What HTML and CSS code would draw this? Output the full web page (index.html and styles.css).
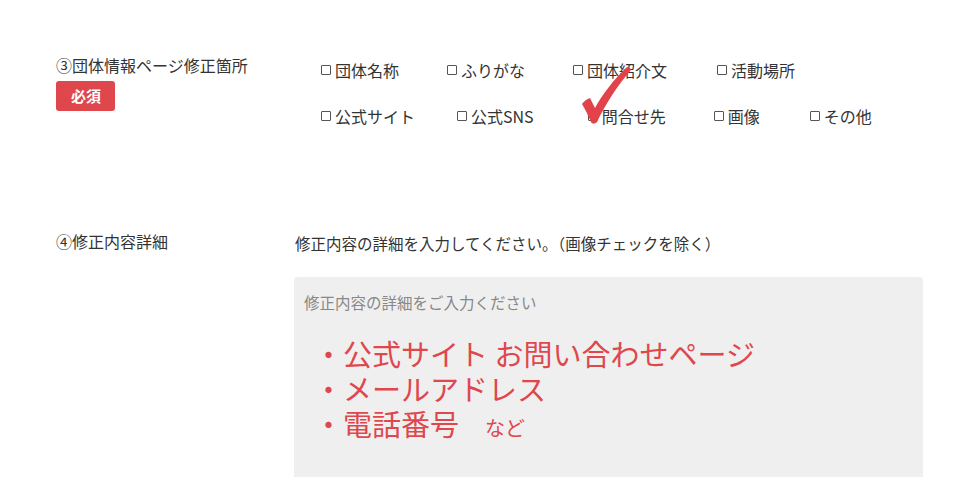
FILE: index.html
```html
<!DOCTYPE html>
<html lang="ja">
<head>
<meta charset="utf-8">
<link rel="stylesheet" href="styles.css">
</head>
<body>
<div class="form">
  <div class="row row-first">
    <div class="head">
      <div class="label">③団体情報ページ修正箇所</div>
      <span class="badge">必須</span>
    </div>
    <div class="body">
      <div class="checks">
        <div class="check-line">
          <span class="check"><i class="box"></i>団体名称</span>
          <span class="check"><i class="box"></i>ふりがな</span>
          <span class="check"><i class="box"></i>団体紹介文</span>
          <span class="check shift-r"><i class="box"></i>活動場所</span>
        </div>
        <div class="check-line">
          <span class="check tight"><i class="box"></i>公式サイト</span>
          <span class="check loose"><i class="box"></i>公式SNS</span>
          <span class="check"><i class="box"></i>問合せ先</span>
          <span class="check"><i class="box"></i>画像</span>
          <span class="check shift-r"><i class="box"></i>その他</span>
        </div>
      </div>
    </div>
  </div>
  <div class="row row-second">
    <div class="head">
      <div class="label">④修正内容詳細</div>
    </div>
    <div class="body">
      <div class="desc">修正内容の詳細を入力してください。（画像チェックを除く）</div>
      <div class="textbox">
        <div class="placeholder">修正内容の詳細をご入力ください</div>
        <div class="note">
          <div>・公式サイト お問い合わせページ</div>
          <div>・メールアドレス</div>
          <div>・電話番号<span class="small">など</span></div>
        </div>
      </div>
    </div>
  </div>
</div>
<svg class="tick" width="60" height="70" viewBox="0 0 60 70">
  <path d="M2 39 C4 36 7 34 10 33 L15 43 C22 30 34 14 47 2 C49 2 51 3 51 5 C38 20 26 38 17 57 C15 59 12 59 11 57 C8 50 5 44 2 39 Z" fill="#e2434a"/>
</svg>
</body>
</html>
```

FILE: styles.css
```css
body {
  margin: 0;
  background: #fff;
  color: #333;
  font-family: "Noto Sans CJK JP", "Noto Sans", sans-serif;
}

.form {
  padding: 54px 0 0 56px;
}

.row {
  display: grid;
  grid-template-columns: 238px 629px;
}

.label {
  font-size: 16px;
  line-height: 22px;
}

.badge {
  display: inline-block;
  margin-top: 5px;
  height: 30px;
  line-height: 30px;
  padding: 0 14px 0 15px;
  background: #e0474c;
  color: #fff;
  font-size: 15px;
  font-weight: bold;
  border-radius: 3px;
}

.checks {
  padding: 4px 0 0 27px;
  display: flex;
  flex-direction: column;
  gap: 22px;
}

.check-line {
  display: flex;
  gap: 48px;
  font-size: 16px;
  line-height: 24px;
}

.check {
  display: inline-flex;
  align-items: center;
  white-space: nowrap;
}

.check.tight {
  margin-right: -6px;
}

.check.loose {
  margin-right: 6px;
}

.check.shift-r {
  margin-left: 2px;
}

.box {
  display: inline-block;
  width: 8px;
  height: 8px;
  border: 1px solid #555;
  border-radius: 1px;
  margin-right: 4px;
}

.row-second {
  margin-top: 102px;
}

.desc {
  font-size: 15.5px;
  line-height: 22px;
  margin-top: 2px;
  margin-left: 1px;
}

.textbox {
  margin-top: 23px;
  height: 240px;
  background: #efefef;
  border-radius: 4px 4px 0 0;
  padding: 14px 10px 0 10px;
}

.placeholder {
  font-size: 15.5px;
  line-height: 22px;
  color: #888;
}

.note {
  margin-top: 23px;
  margin-left: 10px;
  color: #e0474c;
  font-size: 29px;
  line-height: 35px;
}

.small {
  font-size: 20px;
  margin-left: 26px;
}

.tick {
  position: absolute;
  left: 580px;
  top: 65px;
}
```
